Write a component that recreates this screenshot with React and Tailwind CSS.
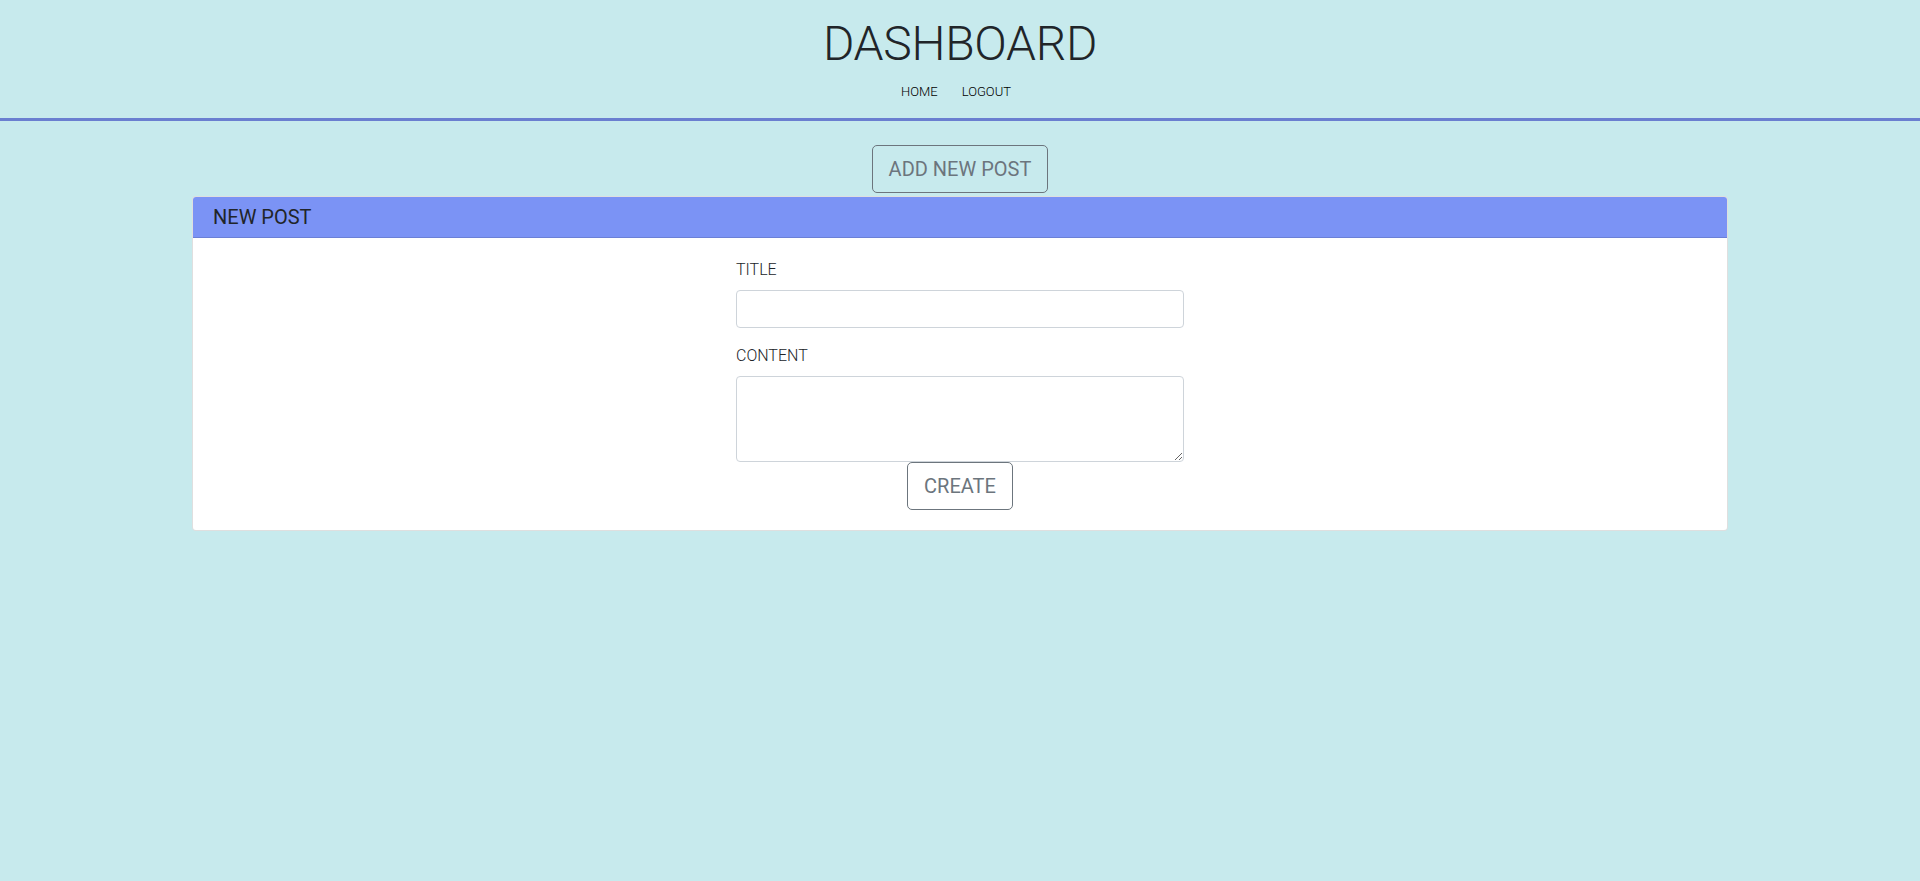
import React, { useState } from "react";

const Dashboard = () => {
  const [title, setTitle] = useState("");
  const [content, setContent] = useState("");

  return (
    <div className="min-h-screen bg-[#c7eaed] font-['Roboto','Liberation_Sans',sans-serif] text-[#212529]">
      {/* Header */}
      <header className="border-b-[3px] border-[#6a7fd0] pt-[15px] pb-[16px] text-center">
        <h1 className="text-[48px] leading-[57.6px] font-light tracking-[-0.3px]">
          DASHBOARD
        </h1>
        <nav className="mt-[9px] flex justify-center gap-6 pr-2 text-[13px] leading-5 font-light text-black">
          <a href="#">HOME</a>
          <a href="#">LOGOUT</a>
        </nav>
      </header>

      {/* Add post button */}
      <div className="mt-6 mb-[3px] flex justify-center">
        <button className="h-12 rounded-[5px] border border-[#6c757d] px-4 text-[20px] leading-[30px] text-[#6c757d]">
          ADD NEW POST
        </button>
      </div>

      {/* New post card */}
      <div className="mx-auto w-4/5 overflow-hidden rounded border border-black/[0.125] bg-white">
        <div className="border-b border-black/[0.125] bg-[#7b93f5] px-5 py-2 text-[20px] leading-6">
          NEW POST
        </div>
        <div className="px-5 pt-5 pb-5">
          <form
            className="mx-auto flex w-[448px] flex-col"
            onSubmit={(e) => e.preventDefault()}
          >
            <label className="mb-2 text-[16px] leading-6 font-light">TITLE</label>
            <input
              type="text"
              value={title}
              onChange={(e) => setTitle(e.target.value)}
              className="h-[38px] rounded border border-[#ced4da] bg-white px-3 text-[16px] outline-none"
            />
            <label className="mt-4 mb-2 text-[16px] leading-6 font-light">CONTENT</label>
            <textarea
              rows={3}
              value={content}
              onChange={(e) => setContent(e.target.value)}
              className="block h-[86px] rounded border border-[#ced4da] bg-white px-3 py-[6px] text-[16px] outline-none"
            />
            <div className="flex justify-center">
              <button
                type="submit"
                className="h-12 rounded-[5px] border border-[#6c757d] px-4 text-[20px] leading-[30px] text-[#6c757d]"
              >
                CREATE
              </button>
            </div>
          </form>
        </div>
      </div>
    </div>
  );
};

export default Dashboard;
